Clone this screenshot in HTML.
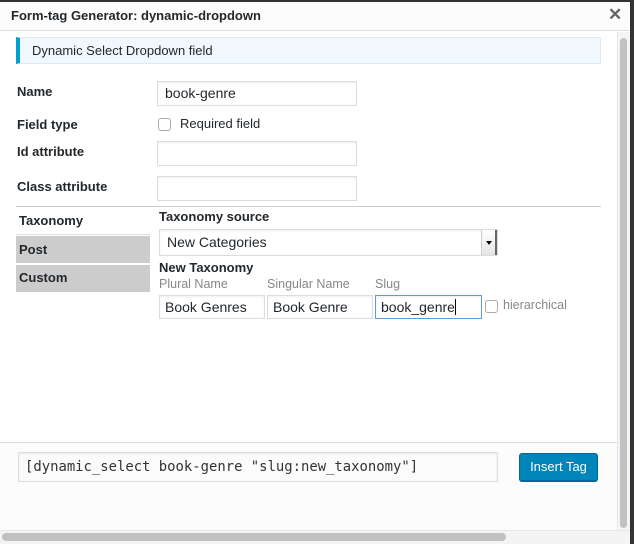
<!DOCTYPE html>
<html><head><meta charset="utf-8"><style>
*{box-sizing:border-box;margin:0;padding:0}
body{width:634px;height:544px;background:#333;font-family:"Liberation Sans",Arial,sans-serif;font-size:13px;color:#23282d;position:relative;overflow:hidden}
.a{position:absolute}
.dlg{left:0;top:2px;width:630px;height:542px;background:#fff}
.title{left:0;top:2px;width:630px;height:29px;background:#fcfcfc;border-bottom:1px solid #ddd;font-weight:bold;font-size:13px;line-height:28px;padding-left:11px}
.x{left:608px;top:6px;font-size:17px;font-weight:bold;color:#666;line-height:18px}
.notice{left:16px;top:37px;width:585px;height:27px;background:#f1f8fd;border:1px solid #dcebf5;border-left:4px solid #00a0d2;line-height:25px;padding-left:12px;font-size:13px}
.lbl{font-weight:bold;font-size:13px}
.inp{background:#fff;border:1px solid #ddd;height:25px;line-height:23px;padding-left:7px;font-size:14px;box-shadow:inset 0 1px 2px rgba(0,0,0,.07)}
.cb{width:13px;height:13px;border:1px solid #aaa;border-radius:3px;background:#fff}
.gray{color:#888;font-size:12.5px}
.tab{left:16px;width:134px;font-weight:bold;font-size:13px;padding-left:3px}
</style></head><body>
<div class="a dlg"></div>
<div class="a title">Form-tag Generator: dynamic-dropdown</div>
<div class="a x">✕</div>
<div class="a" style="left:617px;top:32px;width:13px;height:500px;background:#f4f4f4;border-left:1px solid #e6e6e6"></div>
<div class="a" style="left:620px;top:38px;width:7px;height:490px;background:#c1c1c1;border-radius:4px"></div>
<div class="a notice">Dynamic Select Dropdown field</div>

<div class="a lbl" style="left:17px;top:84px">Name</div>
<div class="a inp" style="left:157px;top:81px;width:200px">book-genre</div>
<div class="a lbl" style="left:17px;top:117px">Field type</div>
<div class="a cb" style="left:158px;top:118px"></div>
<div class="a" style="left:180px;top:116px;font-size:13px">Required field</div>
<div class="a lbl" style="left:17px;top:144px">Id attribute</div>
<div class="a inp" style="left:157px;top:141px;width:200px"></div>
<div class="a lbl" style="left:17px;top:179px">Class attribute</div>
<div class="a inp" style="left:157px;top:176px;width:200px"></div>

<div class="a" style="left:16px;top:206px;width:585px;height:1px;background:#ccc"></div>
<div class="a" style="left:16px;top:206px;width:1px;height:29px;background:#ccc"></div>
<div class="a tab" style="top:207px;height:28px;line-height:28px;background:#fff;border-bottom:1px solid #ddd">Taxonomy</div>
<div class="a tab" style="top:236px;height:27px;line-height:27px;background:#cccccc">Post</div>
<div class="a tab" style="top:265px;height:27px;line-height:25px;background:#cccccc">Custom</div>

<div class="a lbl" style="left:159px;top:209px">Taxonomy source</div>
<div class="a inp" style="left:159px;top:229px;width:339px;height:27px;line-height:25px">New Categories</div>
<div class="a" style="left:481px;top:230px;width:16px;height:25px;background:linear-gradient(#fff,#e4e4e4);border-left:1px solid #ccc;border-right:2px solid #666"></div>
<div class="a" style="left:486px;top:241px;width:0;height:0;border-left:3px solid transparent;border-right:3px solid transparent;border-top:4px solid #000"></div>
<div class="a lbl" style="left:159px;top:260px">New Taxonomy</div>
<div class="a gray" style="left:159px;top:277px">Plural Name</div>
<div class="a gray" style="left:267px;top:277px">Singular Name</div>
<div class="a gray" style="left:375px;top:277px">Slug</div>
<div class="a inp" style="left:159px;top:295px;width:106px;height:24px;line-height:22px;padding-left:5px">Book Genres</div>
<div class="a inp" style="left:267px;top:295px;width:106px;height:24px;line-height:22px;padding-left:5px">Book Genre</div>
<div class="a inp" style="left:375px;top:295px;width:107px;height:24px;line-height:22px;padding-left:5px;border-color:#5b9dd9">book_genre<span style="border-left:1px solid #000;margin-left:0"></span></div>
<div class="a cb" style="left:485px;top:300px"></div>
<div class="a gray" style="left:503px;top:298px">hierarchical</div>

<div class="a" style="left:0;top:442px;width:617px;height:90px;background:#fcfcfc;border-top:1px solid #ddd"></div>
<div class="a inp" style="left:18px;top:452px;width:480px;height:30px;line-height:28px;padding-left:6px;font-family:'DejaVu Sans Mono','Liberation Mono',monospace;font-size:13.9px;color:#333;background:#fbfbfb">[dynamic_select book-genre "slug:new_taxonomy"]</div>
<div class="a" style="left:519px;top:453px;width:79px;height:28px;background:#0085ba;border:1px solid #006799;border-radius:3px;box-shadow:0 1px 0 #006799;color:#fff;font-size:13px;text-align:center;line-height:26px">Insert Tag</div>
<div class="a" style="left:0;top:530px;width:630px;height:14px;background:#f4f4f4;border-top:1px solid #e6e6e6"></div>
<div class="a" style="left:2px;top:533px;width:504px;height:8px;background:#c1c1c1;border-radius:4px"></div>
</body></html>
